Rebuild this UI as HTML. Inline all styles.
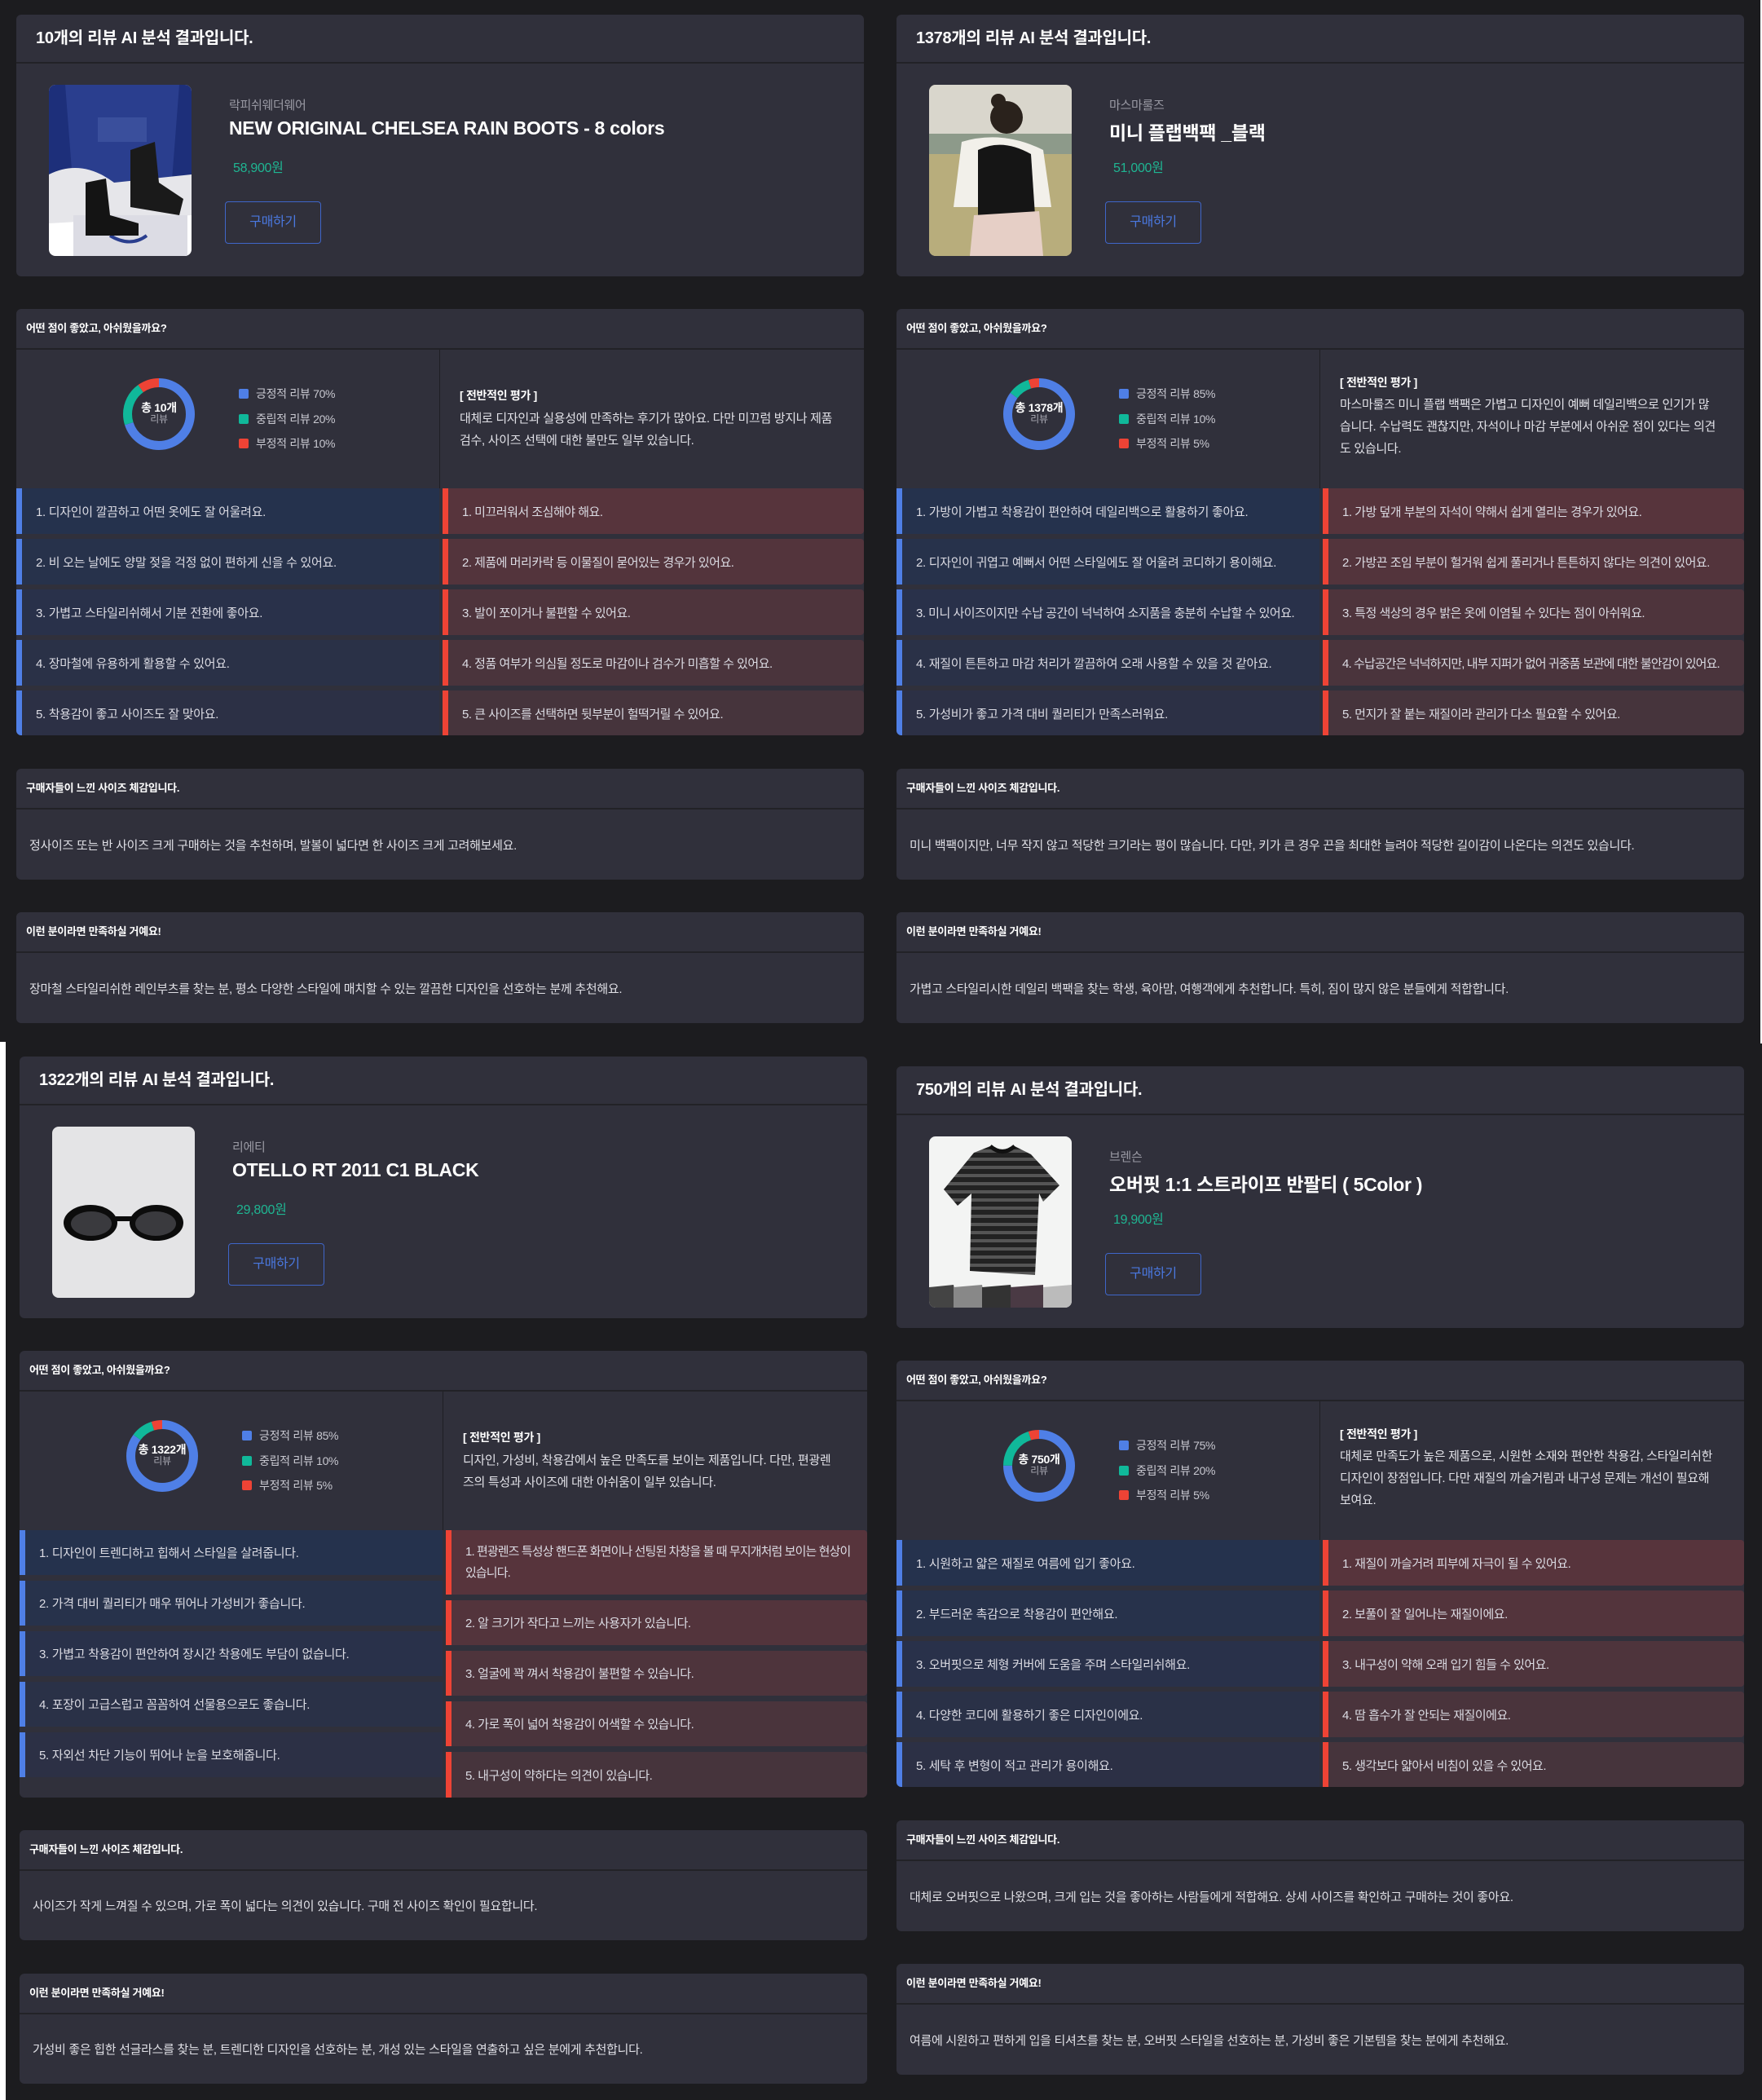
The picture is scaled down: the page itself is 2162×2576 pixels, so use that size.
<!DOCTYPE html>
<html><head><meta charset="utf-8">
<style>
*{margin:0;padding:0;box-sizing:border-box}
html,body{width:2162px;height:2576px;background:#1c1c1f;overflow:hidden;font-family:"Liberation Sans","Noto Sans CJK KR",sans-serif;color:#e4e4ea;letter-spacing:-0.3px}
.ab{position:absolute}
.p{position:absolute;width:1040px;height:1260px}
.card{position:absolute;left:0;width:1040px;background:#30303b;border-radius:6px;overflow:hidden}
.hd{position:absolute;left:0;top:0;width:100%;border-bottom:2px solid #222227;padding-left:24px;font-weight:bold;color:#fff}
.h1{height:60px;line-height:58px;font-size:20px}
.h2{height:50px;line-height:48px;font-size:13px;padding-left:12px}
.img{position:absolute;left:40px;top:86px;width:175px;height:210px;border-radius:8px;overflow:hidden}
.brand{position:absolute;left:261px;top:100px;font-size:15px;color:#9a9aa4}
.title{position:absolute;left:261px;top:126px;font-size:23px;font-weight:bold;color:#fff;white-space:nowrap}
.price{position:absolute;left:266px;top:174px;font-size:16px;color:#1fb592}
.btn{position:absolute;left:256px;top:229px;width:118px;height:52px;border:1.5px solid #3f66c9;border-radius:4px;color:#4a78e0;font-size:16px;text-align:center;line-height:49px}
.split{position:absolute;left:519px;top:50px;width:1px;height:170px;background:#1f1f24}
.donut{position:absolute;left:131px;top:85px;width:88px;height:88px}
.dl{position:absolute;left:131px;top:113px;width:88px;text-align:center;font-size:14px;font-weight:bold;color:#fff;line-height:16px}
.dl span{display:block;font-size:12px;font-weight:normal;color:#a8a8b2;line-height:13px}
.lg{position:absolute;left:273px;font-size:14px;color:#c8c8d0;white-space:nowrap;line-height:16px}
.lg i{display:inline-block;width:12px;height:12px;border-radius:2px;margin-right:9px;vertical-align:-1px}
.ovh{position:absolute;left:544px;top:96px;font-size:14px;font-weight:bold;color:#fff}
.ovt{position:absolute;left:544px;top:121px;width:480px;font-size:15px;line-height:27px;color:#e2e2e8;white-space:nowrap}
.r{position:absolute;height:56px;display:flex;align-items:center;padding-left:24px;font-size:15px;color:#dcdce4;white-space:nowrap;overflow:hidden}
.r.L{left:0;width:519px;border-left:7px solid #4f7fe6;padding-left:17px}
.r.R{left:523px;width:517px;border-left:7px solid #ee4335;padding-left:17px;border-radius:0 4px 4px 0;letter-spacing:-0.5px}
.txt{position:absolute;left:16px;font-size:15px;color:#e0e0e6;white-space:nowrap}
</style></head><body>

<div class="ab" style="left:2160px;top:0;width:2px;height:1280px;background:#fff"></div>
<div class="ab" style="left:0;top:1278px;width:7px;height:1298px;background:#fff"></div>

<!-- ============ TOP LEFT ============ -->
<div class="p" style="left:20px;top:18px">
 <div class="card" style="top:0;height:321px">
  <div class="hd h1">10개의 리뷰 AI 분석 결과입니다.</div>
  <div class="img" style="background:#fff">
   <svg width="175" height="210" viewBox="0 0 175 210">
    <rect x="0" y="0" width="175" height="120" fill="#1d2f7a"/>
    <polygon points="20,0 160,0 150,130 30,130" fill="#2a3e8e"/>
    <rect x="60" y="40" width="60" height="30" fill="#3a4f9c"/>
    <path d="M0 110 Q40 90 80 120 L175 110 L175 160 L0 170Z" fill="#e6e6ea"/>
    <rect x="30" y="160" width="140" height="50" fill="#dcdce4"/>
    <path d="M75 185 Q100 200 120 185" stroke="#2a3e8e" stroke-width="4" fill="none"/>
    <path d="M45 120 L70 115 L75 160 L110 170 L110 185 L45 185Z" fill="#141414"/>
    <path d="M100 80 L130 70 L135 120 L165 140 L160 160 L100 150Z" fill="#1a1a1a"/>
   </svg>
  </div>
  <div class="brand">락피쉬웨더웨어</div>
  <div class="title">NEW ORIGINAL CHELSEA RAIN BOOTS - 8 colors</div>
  <div class="price">58,900원</div>
  <div class="btn">구매하기</div>
 </div>
 <div class="card" style="top:361px;height:523px">
  <div class="hd h2">어떤 점이 좋았고, 아쉬웠을까요?</div>
  <div class="split"></div>
  <svg class="donut" viewBox="0 0 88 88"><g transform="rotate(-90 44 44)" fill="none" stroke-width="11">
   <circle cx="44" cy="44" r="38.5" stroke="#4f7fe6" stroke-dasharray="169.3 300"/>
   <circle cx="44" cy="44" r="38.5" stroke="#10b89a" stroke-dasharray="48.4 300" stroke-dashoffset="-169.3"/>
   <circle cx="44" cy="44" r="38.5" stroke="#ee4335" stroke-dasharray="24.2 300" stroke-dashoffset="-217.7"/></g></svg>
  <div class="dl">총 10개<span>리뷰</span></div>
  <div class="lg" style="top:96px"><i style="background:#4f7fe6"></i>긍정적 리뷰 70%</div>
  <div class="lg" style="top:127px"><i style="background:#10b89a"></i>중립적 리뷰 20%</div>
  <div class="lg" style="top:157px"><i style="background:#ee4335"></i>부정적 리뷰 10%</div>
  <div class="ovh">[ 전반적인 평가 ]</div>
  <div class="ovt">대체로 디자인과 실용성에 만족하는 후기가 많아요. 다만 미끄럼 방지나 제품<br>검수, 사이즈 선택에 대한 불만도 일부 있습니다.</div>
  <div class="r L" style="top:220px;background:#25324d">1. 디자인이 깔끔하고 어떤 옷에도 잘 어울려요.</div>
  <div class="r L" style="top:282px;background:#27324b">2. 비 오는 날에도 양말 젖을 걱정 없이 편하게 신을 수 있어요.</div>
  <div class="r L" style="top:344px;background:#29314a">3. 가볍고 스타일리쉬해서 기분 전환에 좋아요.</div>
  <div class="r L" style="top:406px;background:#2a3147">4. 장마철에 유용하게 활용할 수 있어요.</div>
  <div class="r L" style="top:468px;background:#2c3045">5. 착용감이 좋고 사이즈도 잘 맞아요.</div>
  <div class="r R" style="top:220px;background:#57343c">1. 미끄러워서 조심해야 해요.</div>
  <div class="r R" style="top:282px;background:#53343c">2. 제품에 머리카락 등 이물질이 묻어있는 경우가 있어요.</div>
  <div class="r R" style="top:344px;background:#4e343c">3. 발이 쪼이거나 불편할 수 있어요.</div>
  <div class="r R" style="top:406px;background:#4a343c">4. 정품 여부가 의심될 정도로 마감이나 검수가 미흡할 수 있어요.</div>
  <div class="r R" style="top:468px;background:#46343c">5. 큰 사이즈를 선택하면 뒷부분이 헐떡거릴 수 있어요.</div>
 </div>
 <div class="card" style="top:925px;height:136px">
  <div class="hd h2">구매자들이 느낀 사이즈 체감입니다.</div>
  <div class="txt" style="top:83px">정사이즈 또는 반 사이즈 크게 구매하는 것을 추천하며, 발볼이 넓다면 한 사이즈 크게 고려해보세요.</div>
 </div>
 <div class="card" style="top:1101px;height:136px">
  <div class="hd h2">이런 분이라면 만족하실 거예요!</div>
  <div class="txt" style="top:83px">장마철 스타일리쉬한 레인부츠를 찾는 분, 평소 다양한 스타일에 매치할 수 있는 깔끔한 디자인을 선호하는 분께 추천해요.</div>
 </div>
</div>

<!-- ============ TOP RIGHT ============ -->
<div class="p" style="left:1100px;top:18px">
 <div class="card" style="top:0;height:321px">
  <div class="hd h1">1378개의 리뷰 AI 분석 결과입니다.</div>
  <div class="img" style="background:#b9b38f">
   <svg width="175" height="210" viewBox="0 0 175 210">
    <rect width="175" height="70" fill="#d9d6cc"/>
    <rect y="60" width="175" height="25" fill="#8d9a8a"/>
    <rect y="85" width="175" height="125" fill="#b8ad7c"/>
    <path d="M40 70 Q90 55 140 80 L150 150 L30 150Z" fill="#f2f0ea"/>
    <circle cx="95" cy="40" r="20" fill="#2a221c"/>
    <circle cx="85" cy="20" r="9" fill="#2a221c"/>
    <path d="M60 80 Q90 65 125 85 L130 160 L60 165Z" fill="#151515"/>
    <path d="M55 160 L135 155 L140 210 L50 210Z" fill="#e6cfc6"/>
   </svg>
  </div>
  <div class="brand">마스마룰즈</div>
  <div class="title">미니 플랩백팩 _블랙</div>
  <div class="price">51,000원</div>
  <div class="btn">구매하기</div>
 </div>
 <div class="card" style="top:361px;height:523px">
  <div class="hd h2">어떤 점이 좋았고, 아쉬웠을까요?</div>
  <div class="split"></div>
  <svg class="donut" viewBox="0 0 88 88"><g transform="rotate(-90 44 44)" fill="none" stroke-width="11">
   <circle cx="44" cy="44" r="38.5" stroke="#4f7fe6" stroke-dasharray="205.6 300"/>
   <circle cx="44" cy="44" r="38.5" stroke="#10b89a" stroke-dasharray="24.2 300" stroke-dashoffset="-205.6"/>
   <circle cx="44" cy="44" r="38.5" stroke="#ee4335" stroke-dasharray="12.1 300" stroke-dashoffset="-229.8"/></g></svg>
  <div class="dl">총 1378개<span>리뷰</span></div>
  <div class="lg" style="top:96px"><i style="background:#4f7fe6"></i>긍정적 리뷰 85%</div>
  <div class="lg" style="top:127px"><i style="background:#10b89a"></i>중립적 리뷰 10%</div>
  <div class="lg" style="top:157px"><i style="background:#ee4335"></i>부정적 리뷰 5%</div>
  <div class="ovh" style="top:80px">[ 전반적인 평가 ]</div>
  <div class="ovt" style="top:104px">마스마룰즈 미니 플랩 백팩은 가볍고 디자인이 예뻐 데일리백으로 인기가 많<br>습니다. 수납력도 괜찮지만, 자석이나 마감 부분에서 아쉬운 점이 있다는 의견<br>도 있습니다.</div>
  <div class="r L" style="top:220px;background:#25324d">1. 가방이 가볍고 착용감이 편안하여 데일리백으로 활용하기 좋아요.</div>
  <div class="r L" style="top:282px;background:#27324b">2. 디자인이 귀엽고 예뻐서 어떤 스타일에도 잘 어울려 코디하기 용이해요.</div>
  <div class="r L" style="top:344px;background:#29314a;letter-spacing:-0.5px">3. 미니 사이즈이지만 수납 공간이 넉넉하여 소지품을 충분히 수납할 수 있어요.</div>
  <div class="r L" style="top:406px;background:#2a3147">4. 재질이 튼튼하고 마감 처리가 깔끔하여 오래 사용할 수 있을 것 같아요.</div>
  <div class="r L" style="top:468px;background:#2c3045">5. 가성비가 좋고 가격 대비 퀄리티가 만족스러워요.</div>
  <div class="r R" style="top:220px;background:#57343c">1. 가방 덮개 부분의 자석이 약해서 쉽게 열리는 경우가 있어요.</div>
  <div class="r R" style="top:282px;background:#53343c">2. 가방끈 조임 부분이 헐거워 쉽게 풀리거나 튼튼하지 않다는 의견이 있어요.</div>
  <div class="r R" style="top:344px;background:#4e343c">3. 특정 색상의 경우 밝은 옷에 이염될 수 있다는 점이 아쉬워요.</div>
  <div class="r R" style="top:406px;background:#4a343c;letter-spacing:-0.9px">4. 수납공간은 넉넉하지만, 내부 지퍼가 없어 귀중품 보관에 대한 불안감이 있어요.</div>
  <div class="r R" style="top:468px;background:#46343c">5. 먼지가 잘 붙는 재질이라 관리가 다소 필요할 수 있어요.</div>
 </div>
 <div class="card" style="top:925px;height:136px">
  <div class="hd h2">구매자들이 느낀 사이즈 체감입니다.</div>
  <div class="txt" style="top:83px">미니 백팩이지만, 너무 작지 않고 적당한 크기라는 평이 많습니다. 다만, 키가 큰 경우 끈을 최대한 늘려야 적당한 길이감이 나온다는 의견도 있습니다.</div>
 </div>
 <div class="card" style="top:1101px;height:136px">
  <div class="hd h2">이런 분이라면 만족하실 거예요!</div>
  <div class="txt" style="top:83px">가볍고 스타일리시한 데일리 백팩을 찾는 학생, 육아맘, 여행객에게 추천합니다. 특히, 짐이 많지 않은 분들에게 적합합니다.</div>
 </div>
</div>

<!-- ============ BOTTOM LEFT ============ -->
<div class="p" style="left:24px;top:1296px">
 <div class="card" style="top:0;height:321px">
  <div class="hd h1">1322개의 리뷰 AI 분석 결과입니다.</div>
  <div class="img" style="background:#e4e4e6">
   <svg width="175" height="210" viewBox="0 0 175 210">
    <ellipse cx="47" cy="118" rx="33" ry="22" fill="#0c0c0c"/>
    <ellipse cx="128" cy="118" rx="33" ry="22" fill="#0c0c0c"/>
    <ellipse cx="48" cy="119" rx="25" ry="15" fill="#3a3a3e"/>
    <ellipse cx="127" cy="119" rx="25" ry="15" fill="#3a3a3e"/>
    <rect x="78" y="110" width="20" height="6" fill="#0c0c0c"/>
   </svg>
  </div>
  <div class="brand">리에티</div>
  <div class="title">OTELLO RT 2011 C1 BLACK</div>
  <div class="price">29,800원</div>
  <div class="btn">구매하기</div>
 </div>
 <div class="card" style="top:361px;height:548px">
  <div class="hd h2">어떤 점이 좋았고, 아쉬웠을까요?</div>
  <div class="split"></div>
  <svg class="donut" viewBox="0 0 88 88"><g transform="rotate(-90 44 44)" fill="none" stroke-width="11">
   <circle cx="44" cy="44" r="38.5" stroke="#4f7fe6" stroke-dasharray="205.6 300"/>
   <circle cx="44" cy="44" r="38.5" stroke="#10b89a" stroke-dasharray="24.2 300" stroke-dashoffset="-205.6"/>
   <circle cx="44" cy="44" r="38.5" stroke="#ee4335" stroke-dasharray="12.1 300" stroke-dashoffset="-229.8"/></g></svg>
  <div class="dl">총 1322개<span>리뷰</span></div>
  <div class="lg" style="top:96px"><i style="background:#4f7fe6"></i>긍정적 리뷰 85%</div>
  <div class="lg" style="top:127px"><i style="background:#10b89a"></i>중립적 리뷰 10%</div>
  <div class="lg" style="top:157px"><i style="background:#ee4335"></i>부정적 리뷰 5%</div>
  <div class="ovh">[ 전반적인 평가 ]</div>
  <div class="ovt">디자인, 가성비, 착용감에서 높은 만족도를 보이는 제품입니다. 다만, 편광렌<br>즈의 특성과 사이즈에 대한 아쉬움이 일부 있습니다.</div>
  <div class="r L" style="top:220px;height:55px;background:#25324d">1. 디자인이 트렌디하고 힙해서 스타일을 살려줍니다.</div>
  <div class="r L" style="top:282px;height:55px;background:#27324b">2. 가격 대비 퀄리티가 매우 뛰어나 가성비가 좋습니다.</div>
  <div class="r L" style="top:344px;height:55px;background:#29314a">3. 가볍고 착용감이 편안하여 장시간 착용에도 부담이 없습니다.</div>
  <div class="r L" style="top:406px;height:55px;background:#2a3147">4. 포장이 고급스럽고 꼼꼼하여 선물용으로도 좋습니다.</div>
  <div class="r L" style="top:468px;height:55px;background:#2c3045">5. 자외선 차단 기능이 뛰어나 눈을 보호해줍니다.</div>
  <div class="r R" style="top:220px;height:79px;line-height:26px;letter-spacing:-0.9px;background:#57343c"><div>1. 편광렌즈 특성상 핸드폰 화면이나 선팅된 차창을 볼 때 무지개처럼 보이는 현상이<br>있습니다.</div></div>
  <div class="r R" style="top:306px;height:55px;background:#53343c">2. 알 크기가 작다고 느끼는 사용자가 있습니다.</div>
  <div class="r R" style="top:368px;height:55px;background:#4e343c">3. 얼굴에 꽉 껴서 착용감이 불편할 수 있습니다.</div>
  <div class="r R" style="top:430px;height:55px;background:#4a343c">4. 가로 폭이 넓어 착용감이 어색할 수 있습니다.</div>
  <div class="r R" style="top:492px;height:56px;background:#46343c">5. 내구성이 약하다는 의견이 있습니다.</div>
 </div>
 <div class="card" style="top:949px;height:135px">
  <div class="hd h2">구매자들이 느낀 사이즈 체감입니다.</div>
  <div class="txt" style="top:82px">사이즈가 작게 느껴질 수 있으며, 가로 폭이 넓다는 의견이 있습니다. 구매 전 사이즈 확인이 필요합니다.</div>
 </div>
 <div class="card" style="top:1125px;height:135px">
  <div class="hd h2">이런 분이라면 만족하실 거예요!</div>
  <div class="txt" style="top:82px">가성비 좋은 힙한 선글라스를 찾는 분, 트렌디한 디자인을 선호하는 분, 개성 있는 스타일을 연출하고 싶은 분에게 추천합니다.</div>
 </div>
</div>

<!-- ============ BOTTOM RIGHT ============ -->
<div class="p" style="left:1100px;top:1308px">
 <div class="card" style="top:0;height:321px">
  <div class="hd h1">750개의 리뷰 AI 분석 결과입니다.</div>
  <div class="img" style="background:#f3f4f3">
   <svg width="175" height="210" viewBox="0 0 175 210">
    <defs><pattern id="st" width="10" height="10" patternUnits="userSpaceOnUse"><rect width="10" height="10" fill="#222"/><rect y="6" width="10" height="4" fill="#555"/></pattern></defs>
    <path d="M55 20 L75 12 Q90 22 105 12 L125 22 L160 60 L140 80 L135 70 L130 170 L50 165 L52 70 L35 85 L18 65Z" fill="url(#st)"/>
    <path d="M75 12 Q90 25 105 12" stroke="#111" stroke-width="5" fill="none"/>
    <g fill="#444"><path d="M0 185 L30 182 L35 210 L0 210Z"/><path d="M30 185 L65 182 L70 210 L30 210Z" fill="#888"/><path d="M65 185 L100 182 L105 210 L65 210Z" fill="#333"/><path d="M100 185 L140 182 L140 210 L100 210Z" fill="#4a3a44"/><path d="M140 185 L175 182 L175 210 L140 210Z" fill="#bbb"/></g>
   </svg>
  </div>
  <div class="brand">브렌슨</div>
  <div class="title">오버핏 1:1 스트라이프 반팔티 ( 5Color )</div>
  <div class="price">19,900원</div>
  <div class="btn">구매하기</div>
 </div>
 <div class="card" style="top:361px;height:523px">
  <div class="hd h2">어떤 점이 좋았고, 아쉬웠을까요?</div>
  <div class="split"></div>
  <svg class="donut" viewBox="0 0 88 88"><g transform="rotate(-90 44 44)" fill="none" stroke-width="11">
   <circle cx="44" cy="44" r="38.5" stroke="#4f7fe6" stroke-dasharray="181.4 300"/>
   <circle cx="44" cy="44" r="38.5" stroke="#10b89a" stroke-dasharray="48.4 300" stroke-dashoffset="-181.4"/>
   <circle cx="44" cy="44" r="38.5" stroke="#ee4335" stroke-dasharray="12.1 300" stroke-dashoffset="-229.8"/></g></svg>
  <div class="dl">총 750개<span>리뷰</span></div>
  <div class="lg" style="top:96px"><i style="background:#4f7fe6"></i>긍정적 리뷰 75%</div>
  <div class="lg" style="top:127px"><i style="background:#10b89a"></i>중립적 리뷰 20%</div>
  <div class="lg" style="top:157px"><i style="background:#ee4335"></i>부정적 리뷰 5%</div>
  <div class="ovh" style="top:80px">[ 전반적인 평가 ]</div>
  <div class="ovt" style="top:104px">대체로 만족도가 높은 제품으로, 시원한 소재와 편안한 착용감, 스타일리쉬한<br>디자인이 장점입니다. 다만 재질의 까슬거림과 내구성 문제는 개선이 필요해<br>보여요.</div>
  <div class="r L" style="top:220px;background:#25324d">1. 시원하고 얇은 재질로 여름에 입기 좋아요.</div>
  <div class="r L" style="top:282px;background:#27324b">2. 부드러운 촉감으로 착용감이 편안해요.</div>
  <div class="r L" style="top:344px;background:#29314a">3. 오버핏으로 체형 커버에 도움을 주며 스타일리쉬해요.</div>
  <div class="r L" style="top:406px;background:#2a3147">4. 다양한 코디에 활용하기 좋은 디자인이에요.</div>
  <div class="r L" style="top:468px;background:#2c3045">5. 세탁 후 변형이 적고 관리가 용이해요.</div>
  <div class="r R" style="top:220px;background:#57343c">1. 재질이 까슬거려 피부에 자극이 될 수 있어요.</div>
  <div class="r R" style="top:282px;background:#53343c">2. 보풀이 잘 일어나는 재질이에요.</div>
  <div class="r R" style="top:344px;background:#4e343c">3. 내구성이 약해 오래 입기 힘들 수 있어요.</div>
  <div class="r R" style="top:406px;background:#4a343c">4. 땀 흡수가 잘 안되는 재질이에요.</div>
  <div class="r R" style="top:468px;background:#46343c">5. 생각보다 얇아서 비침이 있을 수 있어요.</div>
 </div>
 <div class="card" style="top:925px;height:136px">
  <div class="hd h2">구매자들이 느낀 사이즈 체감입니다.</div>
  <div class="txt" style="top:83px">대체로 오버핏으로 나왔으며, 크게 입는 것을 좋아하는 사람들에게 적합해요. 상세 사이즈를 확인하고 구매하는 것이 좋아요.</div>
 </div>
 <div class="card" style="top:1101px;height:136px">
  <div class="hd h2">이런 분이라면 만족하실 거예요!</div>
  <div class="txt" style="top:83px">여름에 시원하고 편하게 입을 티셔츠를 찾는 분, 오버핏 스타일을 선호하는 분, 가성비 좋은 기본템을 찾는 분에게 추천해요.</div>
 </div>
</div>

</body></html>
